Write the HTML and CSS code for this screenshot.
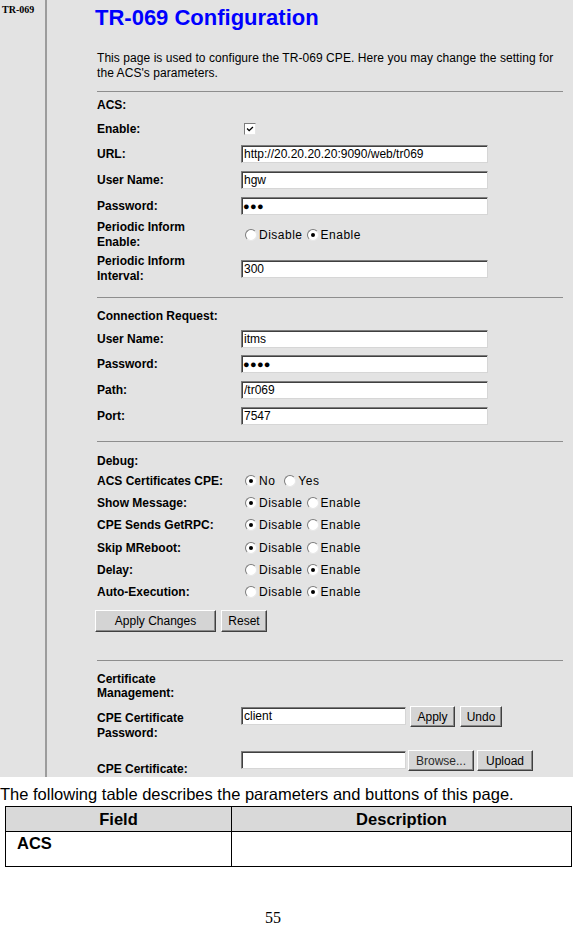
FILE: index.html
```html
<!DOCTYPE html>
<html lang="en">
<head>
<meta charset="utf-8">
<title>TR-069 Configuration</title>
<link rel="stylesheet" href="styles.css">
</head>
<body>
<div class="screen">
  <aside class="sidebar"><span class="side-title">TR-069</span></aside>
  <main class="main">
    <h1 class="title">TR-069 Configuration</h1>
    <p class="intro">This page is used to configure the TR-069 CPE. Here you may change the setting for<br>the ACS's parameters.</p>
    <hr class="rule">

    <section class="sec sec-acs">
      <div class="row h25"><span class="lbl">ACS:</span></div>
      <div class="row h24"><span class="lbl">Enable:</span><span class="check"><svg viewBox="0 0 12 12" width="12" height="12"><path d="M2.5 5.5 L5 8 L9.5 3.5" fill="none" stroke="#000" stroke-width="1.6"/></svg></span></div>
      <div class="row h25"><span class="lbl">URL:</span><input class="field" type="text" value="http://20.20.20.20:9090/web/tr069"></div>
      <div class="row h27"><span class="lbl">User Name:</span><input class="field" type="text" value="hgw"></div>
      <div class="row h26"><span class="lbl">Password:</span><input class="field dots" type="text" value="●●●"></div>
      <div class="row h32"><span class="lbl two">Periodic Inform<br>Enable:</span>
        <span class="opts"><span class="opt"><span class="radio"></span>Disable</span><span class="opt"><span class="radio on"></span>Enable</span></span></div>
      <div class="row h36"><span class="lbl two">Periodic Inform<br>Interval:</span><input class="field" type="text" value="300"></div>
    </section>
    <hr class="rule r10">

    <section class="sec sec-conn">
      <div class="row h22"><span class="lbl">Connection Request:</span></div>
      <div class="row h24"><span class="lbl">User Name:</span><input class="field" type="text" value="itms"></div>
      <div class="row h26"><span class="lbl">Password:</span><input class="field dots" type="text" value="●●●●"></div>
      <div class="row h26"><span class="lbl">Path:</span><input class="field" type="text" value="/tr069"></div>
      <div class="row h26"><span class="lbl">Port:</span><input class="field" type="text" value="7547"></div>
    </section>
    <hr class="rule r12">

    <section class="sec sec-debug">
      <div class="row h20"><span class="lbl">Debug:</span></div>
      <div class="row h20"><span class="lbl">ACS Certificates CPE:</span>
        <span class="opts"><span class="opt wide"><span class="radio on"></span>No</span><span class="opt"><span class="radio"></span>Yes</span></span></div>
      <div class="row h23"><span class="lbl">Show Message:</span>
        <span class="opts"><span class="opt"><span class="radio on"></span>Disable</span><span class="opt"><span class="radio"></span>Enable</span></span></div>
      <div class="row h22"><span class="lbl">CPE Sends GetRPC:</span>
        <span class="opts"><span class="opt"><span class="radio on"></span>Disable</span><span class="opt"><span class="radio"></span>Enable</span></span></div>
      <div class="row h23"><span class="lbl">Skip MReboot:</span>
        <span class="opts"><span class="opt"><span class="radio on"></span>Disable</span><span class="opt"><span class="radio"></span>Enable</span></span></div>
      <div class="row h22"><span class="lbl">Delay:</span>
        <span class="opts"><span class="opt"><span class="radio"></span>Disable</span><span class="opt"><span class="radio on"></span>Enable</span></span></div>
      <div class="row h22"><span class="lbl">Auto-Execution:</span>
        <span class="opts"><span class="opt"><span class="radio"></span>Disable</span><span class="opt"><span class="radio on"></span>Enable</span></span></div>
      <div class="actions">
        <button class="btn w-apply-changes" type="button">Apply Changes</button>
        <button class="btn w-reset" type="button">Reset</button>
      </div>
    </section>
    <hr class="rule r28">

    <section class="sec sec-cert">
      <div class="row h30"><span class="lbl tight">Certificate<br>Management:</span></div>
      <div class="row h40 top"><span class="lbl two pad10">CPE Certificate<br>Password:</span>
        <input class="field short mt6" type="text" value="client">
        <button class="btn w-apply mt5 ml4" type="button">Apply</button>
        <button class="btn w-undo mt5 ml5" type="button">Undo</button>
      </div>
      <div class="row h36 top"><span class="lbl two bottom">CPE Certificate:</span>
        <input class="field short mt10" type="text" value="">
        <button class="btn browse w-browse mt9 ml2" type="button">Browse...</button>
        <button class="btn w-upload mt9 ml3" type="button">Upload</button>
      </div>
    </section>
  </main>
</div>

<p class="caption">The following table describes the parameters and buttons of this page.</p>
<table class="desc">
  <thead>
    <tr><th class="c1">Field</th><th>Description</th></tr>
  </thead>
  <tbody>
    <tr><td class="fname">ACS</td><td></td></tr>
  </tbody>
</table>
<p class="page-num">55</p>
</body>
</html>
```

FILE: styles.css
```css
* { box-sizing: border-box; }
html, body { margin: 0; padding: 0; background: #fff; }
body {
  width: 573px;
  font-family: "Liberation Sans", Arial, sans-serif;
  color: #000;
}

.screen {
  display: flex;
  height: 777px;
  background: #e3e3e3;
  overflow: hidden;
}
.sidebar {
  width: 47px;
  flex: none;
  border-right: 2px solid #9c9c9c;
  padding: 4px 0 0 2px;
}
.side-title {
  display: block;
  font-family: "Liberation Serif", "Times New Roman", serif;
  font-weight: bold;
  font-size: 10px;
  line-height: 12px;
}
.main {
  flex: 1;
  padding: 5px 10px 0 50px;
}
.title {
  margin: 0 0 0 -2px;
  font-size: 22px;
  line-height: 26px;
  font-weight: bold;
  color: #0000ff;
}
.intro {
  margin: 20px 0 0;
  font-size: 12px;
  line-height: 15px;
  letter-spacing: 0.06px;
}
.rule {
  margin: 10px 0 0;
  border: 0;
  border-top: 1px solid #8e8e8e;
  height: 0;
}
.rule.r10 { margin-top: 10px; }
.rule.r12 { margin-top: 12px; }
.rule.r28 { margin-top: 28px; }

.sec-conn { padding-top: 7px; }
.sec-debug { padding-top: 9px; }
.sec-cert { padding-top: 10px; }

.row { display: flex; align-items: center; }
.row.top { align-items: flex-start; }
.h20 { height: 20px; }
.h22 { height: 22px; }
.h23 { height: 23px; }
.h24 { height: 24px; }
.h25 { height: 25px; }
.h26 { height: 26px; }
.h27 { height: 27px; }
.h30 { height: 30px; }
.h32 { height: 32px; }
.h36 { height: 36px; }
.h40 { height: 40px; }

.lbl {
  width: 144px;
  flex: none;
  font-weight: bold;
  font-size: 12px;
  line-height: 14px;
}
.lbl.two { line-height: 15px; }
.lbl.tight { line-height: 14px; }
.lbl.pad10 { padding-top: 10px; }
.lbl.bottom { align-self: flex-end; }

.field {
  width: 247px;
  height: 18px;
  margin: 0;
  padding: 0 2px;
  font-family: "Liberation Sans", Arial, sans-serif;
  font-size: 12px;
  color: #000;
  background: #fff;
  border: 1px solid;
  border-color: #7c7c7c #d6d6d6 #d6d6d6 #7c7c7c;
  box-shadow: inset 1px 1px 0 #404040;
  outline: none;
}
.field.short { width: 165px; }
.field.dots { font-size: 11px; letter-spacing: 0.3px; padding-left: 1px; }

.check {
  width: 12px;
  height: 12px;
  margin-left: 3px;
  background: #fff;
  border: 1px solid;
  border-color: #7c7c7c #e6e6e6 #e6e6e6 #7c7c7c;
  display: flex;
}
.check svg { display: block; width: 10px; height: 10px; }

.opts { display: flex; align-items: center; padding-left: 4px; }
.opt {
  display: inline-flex;
  align-items: center;
  font-size: 12px;
  line-height: 14px;
  margin-right: 4px;
  letter-spacing: 0.5px;
}
.opt.wide { margin-right: 9px; }
.radio {
  position: relative;
  width: 12px;
  height: 12px;
  margin-right: 2px;
  border-radius: 50%;
  background: #fff;
  border: 1px solid;
  border-color: #7c7c7c #e8e8e8 #e8e8e8 #7c7c7c;
  flex: none;
}
.radio.on::after {
  content: "";
  position: absolute;
  left: 3px;
  top: 3px;
  width: 4px;
  height: 4px;
  border-radius: 50%;
  background: #000;
}

.actions { display: flex; margin: 7px 0 0 -2px; gap: 5px; }
.btn {
  height: 22px;
  padding: 0;
  font-family: "Liberation Sans", Arial, sans-serif;
  font-size: 12px;
  color: #000;
  background: #d4d4d4;
  border: 1px solid;
  border-color: #ffffff #404040 #404040 #ffffff;
  box-shadow: inset -1px -1px 0 #8a8a8a;
  flex: none;
}
.btn.browse { color: #2a2a2a; background: #d6d6d6; }
.w-apply-changes { width: 121px; }
.w-reset { width: 46px; }
.w-apply { width: 45px; height: 21px; }
.w-undo { width: 42px; height: 21px; }
.w-browse { width: 66px; height: 21px; }
.w-upload { width: 56px; height: 21px; }
.mt5 { margin-top: 5px; }
.mt6 { margin-top: 6px; }
.mt9 { margin-top: 9px; }
.mt10 { margin-top: 10px; }
.ml2 { margin-left: 2px; }
.ml3 { margin-left: 3px; }
.ml4 { margin-left: 4px; }
.ml5 { margin-left: 5px; }

.caption {
  margin: 8px 0 0;
  font-size: 16.5px;
  line-height: 18px;
}
.desc {
  margin: 3px 0 0 5px;
  width: 567px;
  border-collapse: collapse;
  font-size: 16.5px;
}
.desc th, .desc td { border: 1px solid #000; }
.desc th {
  height: 25px;
  padding: 0;
  background: #d9d9d9;
  font-weight: bold;
  text-align: center;
}
.desc th.c1 { width: 226px; }
.desc td {
  height: 35px;
  padding: 2px 11px;
  vertical-align: top;
}
.desc td.fname { font-weight: bold; }
.page-num {
  width: 546px;
  margin: 44px 0 0;
  font-family: "Liberation Serif", "Times New Roman", serif;
  font-size: 16px;
  line-height: 14px;
  text-align: center;
}
```
